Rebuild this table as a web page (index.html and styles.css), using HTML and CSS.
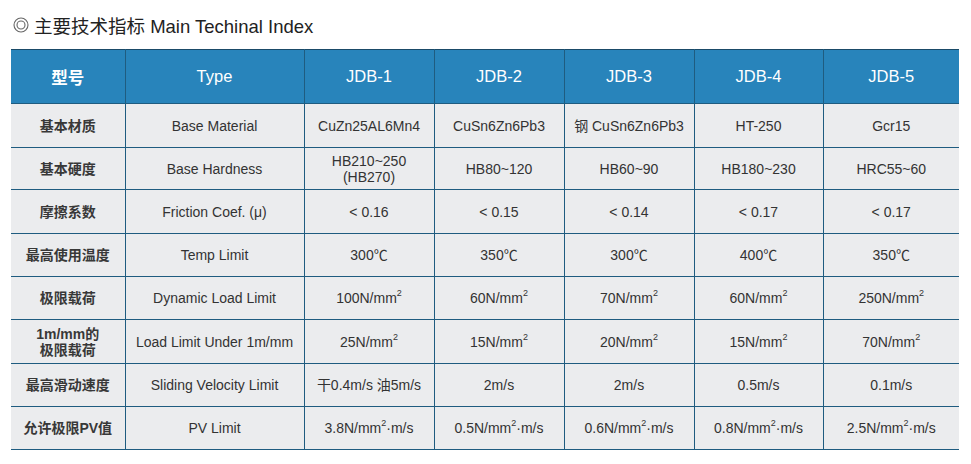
FILE: index.html
```html
<!DOCTYPE html>
<html lang="zh">
<head>
<meta charset="utf-8">
<title>主要技术指标 Main Techinal Index</title>
<link rel="stylesheet" href="styles.css">
</head>
<body>
<div class="page">
  <h2 class="title">
    <svg class="title-icon" width="16" height="16" viewBox="0 0 16 16" aria-hidden="true">
      <circle cx="8" cy="8" r="7" fill="none" stroke="#666" stroke-width="1.1"/>
      <circle cx="8" cy="8" r="4" fill="none" stroke="#666" stroke-width="1.1"/>
    </svg>
    <span>主要技术指标 Main Techinal Index</span>
  </h2>
  <table class="spec">
    <colgroup>
      <col class="c-cn"><col class="c-en"><col class="c-v"><col class="c-v"><col class="c-v"><col class="c-v4"><col class="c-v5">
    </colgroup>
    <thead>
      <tr class="head">
        <th class="cn">型号</th><th>Type</th><th>JDB-1</th><th>JDB-2</th><th>JDB-3</th><th>JDB-4</th><th>JDB-5</th>
      </tr>
    </thead>
    <tbody>
      <tr class="r44">
        <td class="cn">基本材质</td><td>Base Material</td><td>CuZn25AL6Mn4</td><td>CuSn6Zn6Pb3</td><td>钢 CuSn6Zn6Pb3</td><td>HT-250</td><td>Gcr15</td>
      </tr>
      <tr class="r42">
        <td class="cn">基本硬度</td><td>Base Hardness</td><td class="two">HB210~250<br>(HB270)</td><td>HB80~120</td><td>HB60~90</td><td>HB180~230</td><td>HRC55~60</td>
      </tr>
      <tr class="r44">
        <td class="cn">摩擦系数</td><td>Friction Coef. (μ)</td><td>&lt; 0.16</td><td>&lt; 0.15</td><td>&lt; 0.14</td><td>&lt; 0.17</td><td>&lt; 0.17</td>
      </tr>
      <tr class="r43">
        <td class="cn">最高使用温度</td><td>Temp Limit</td><td>300℃</td><td>350℃</td><td>300℃</td><td>400℃</td><td>350℃</td>
      </tr>
      <tr class="r43">
        <td class="cn">极限载荷</td><td>Dynamic Load Limit</td><td>100N/mm<sup>2</sup></td><td>60N/mm<sup>2</sup></td><td>70N/mm<sup>2</sup></td><td>60N/mm<sup>2</sup></td><td>250N/mm<sup>2</sup></td>
      </tr>
      <tr class="r44">
        <td class="cn two">1m/mm的<br>极限载荷</td><td>Load Limit Under 1m/mm</td><td>25N/mm<sup>2</sup></td><td>15N/mm<sup>2</sup></td><td>20N/mm<sup>2</sup></td><td>15N/mm<sup>2</sup></td><td>70N/mm<sup>2</sup></td>
      </tr>
      <tr class="r43">
        <td class="cn">最高滑动速度</td><td>Sliding Velocity Limit</td><td>干0.4m/s 油5m/s</td><td>2m/s</td><td>2m/s</td><td>0.5m/s</td><td>0.1m/s</td>
      </tr>
      <tr class="r43">
        <td class="cn">允许极限PV值</td><td>PV Limit</td><td>3.8N/mm<sup>2</sup>·m/s</td><td>0.5N/mm<sup>2</sup>·m/s</td><td>0.6N/mm<sup>2</sup>·m/s</td><td>0.8N/mm<sup>2</sup>·m/s</td><td>2.5N/mm<sup>2</sup>·m/s</td>
      </tr>
    </tbody>
  </table>
</div>
</body>
</html>
```

FILE: styles.css
```css
* { box-sizing: border-box; }

html, body {
  margin: 0;
  padding: 0;
  background: #ffffff;
}

body {
  font-family: "Liberation Sans", Arial, "Noto Sans CJK SC", sans-serif;
  color: #333333;
}

.page {
  padding: 14px 12px 0 11px;
}

.title {
  display: flex;
  align-items: center;
  gap: 5px;
  margin: 0 0 13px 2px;
  height: 22px;
  font-size: 18.5px;
  font-weight: normal;
  color: #222222;
  font-family: "Liberation Sans", Arial, "Noto Sans CJK SC", sans-serif;
}

.title-icon {
  flex: 0 0 auto;
}

.spec {
  border-collapse: collapse;
  table-layout: fixed;
  width: 948px;
  background: #ebecee;
}

.c-cn { width: 114px; }
.c-en { width: 179px; }
.c-v { width: 130px; }
.c-v4 { width: 129px; }
.c-v5 { width: 136px; }

.spec th,
.spec td {
  padding: 0 2px;
  text-align: center;
  vertical-align: middle;
  border: 1px solid #1f5c80;
  white-space: nowrap;
}

.spec tr > :first-child { border-left: none; }
.spec tr > :last-child { border-right: none; }

.head th {
  height: 54px;
  background: #2884bb;
  color: #ffffff;
  font-size: 16.5px;
  font-weight: normal;
  border-top-color: #1a4a68;
}

.head th.cn {
  font-weight: bold;
  font-size: 16.5px;
}

.spec td {
  font-size: 14px;
  line-height: 16px;
  color: #333333;
}

.spec td.cn {
  font-weight: bold;
  color: #383838;
}

.r44 td { height: 44px; }
.r43 td { height: 43px; }
.r42 td { height: 42px; }

.spec sup {
  font-size: 9px;
  line-height: 0;
  vertical-align: 7px;
}
```
